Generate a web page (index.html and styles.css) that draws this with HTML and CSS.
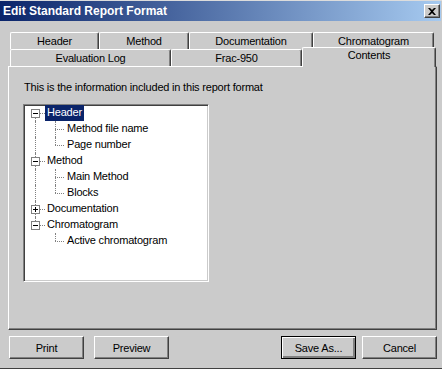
FILE: index.html
```html
<!DOCTYPE html>
<html lang="en">
<head>
    <meta charset="UTF-8">
    <title>Edit Standard Report Format</title>
    <link rel="stylesheet" href="styles.css">
</head>
<body>
    <div class="window">
        <div class="titlebar">
            <span class="title">Edit Standard Report Format</span>
            <span class="close">
                <svg width="8" height="7" viewBox="0 0 8 7"><path d="M0 0h2l2 2 2-2h2L5 3.5 8 7H6L4 5 2 7H0l3-3.5z" fill="#000"/></svg>
            </span>
        </div>
        <div class="dialog">
            <div class="tabs">
                <div class="tab-row back">
                    <div class="tab" style="width:89px">Header</div>
                    <div class="tab" style="width:90px">Method</div>
                    <div class="tab" style="width:124px">Documentation</div>
                    <div class="tab" style="width:121px">Chromatogram</div>
                </div>
                <div class="tab-row front">
                    <div class="tab" style="width:161px">Evaluation Log</div>
                    <div class="tab" style="width:131px">Frac-950</div>
                    <div class="tab active" style="width:134px">Contents</div>
                </div>
            </div>
            <div class="panel">
                <p class="intro">This is the information included in this report format</p>
                <div class="tree">
                    <div class="row root first">
                        <span class="toggle"><svg width="9" height="9"><rect x="0.5" y="0.5" width="8" height="8" fill="#fff" stroke="#808080"/><path d="M2 4.5h5" stroke="#000"/></svg></span>
                        <span class="stub"></span><span class="label selected">Header</span>
                    </div>
                    <div class="row child"><span class="stub"></span><span class="label">Method file name</span></div>
                    <div class="row child last"><span class="stub"></span><span class="label">Page number</span></div>
                    <div class="row root">
                        <span class="toggle"><svg width="9" height="9"><rect x="0.5" y="0.5" width="8" height="8" fill="#fff" stroke="#808080"/><path d="M2 4.5h5" stroke="#000"/></svg></span>
                        <span class="stub"></span><span class="label">Method</span>
                    </div>
                    <div class="row child"><span class="stub"></span><span class="label">Main Method</span></div>
                    <div class="row child last"><span class="stub"></span><span class="label">Blocks</span></div>
                    <div class="row root">
                        <span class="toggle"><svg width="9" height="9"><rect x="0.5" y="0.5" width="8" height="8" fill="#fff" stroke="#808080"/><path d="M2 4.5h5M4.5 2v5" stroke="#000"/></svg></span>
                        <span class="stub"></span><span class="label">Documentation</span>
                    </div>
                    <div class="row root end">
                        <span class="toggle"><svg width="9" height="9"><rect x="0.5" y="0.5" width="8" height="8" fill="#fff" stroke="#808080"/><path d="M2 4.5h5" stroke="#000"/></svg></span>
                        <span class="stub"></span><span class="label">Chromatogram</span>
                    </div>
                    <div class="row child last no-trunk"><span class="stub"></span><span class="label">Active chromatogram</span></div>
                </div>
            </div>
            <div class="buttons">
                <button class="btn">Print</button>
                <button class="btn">Preview</button>
                <span class="spacer"></span>
                <button class="btn default">Save As...</button>
                <button class="btn">Cancel</button>
            </div>
        </div>
    </div>
</body>
</html>
```
FILE: styles.css
```css
* { box-sizing: border-box; }
body {
    margin: 0;
    background: #cbcbcb;
    font-family: 'Liberation Sans', Arial, sans-serif;
    font-size: 11px;
    letter-spacing: -0.2px;
    color: #000;
}
.window {
    width: 442px;
    height: 369px;
    background: #cbcbcb;
    border-top: 1px solid #dcdcdc;
    border-bottom: 1px solid #404040;
    display: flex;
    flex-direction: column;
}
.titlebar {
    height: 20px;
    margin-right: 1px;
    padding: 0 1px 0 3px;
    background: linear-gradient(to right, #0a246a, #a6caf0);
    display: flex;
    align-items: center;
    justify-content: space-between;
    color: #fff;
    font-weight: bold;
    font-size: 12px;
    letter-spacing: 0;
}
.close {
    width: 16px;
    height: 14px;
    background: #cbcbcb;
    border: 1px solid;
    border-color: #fff #404040 #404040 #fff;
    box-shadow: inset -1px -1px #808080;
    display: flex;
    align-items: center;
    justify-content: center;
}
.dialog { flex: 1; display: flex; flex-direction: column; padding: 11px 5px 0 8px; }
.tabs { padding-left: 2px; }
.tab-row { display: flex; height: 17px; align-items: flex-end; }
.tab {
    height: 17px;
    padding-top: 2px;
    line-height: 13px;
    text-align: center;
    border-left: 1px solid #fff;
    border-top: 1px solid #fff;
    border-right: 1px solid #404040;
    border-radius: 2px 2px 0 0;
    box-shadow: inset -1px 0 #808080;
    background: #cbcbcb;
}
.tab.active {
    height: 20px;
    margin-bottom: -1px;
    padding-top: 1px;
    position: relative;
    z-index: 1;
}
.panel {
    height: 264px;
    width: 429px;
    border-left: 1px solid #fff;
    border-top: 1px solid #fff;
    border-right: 1px solid #404040;
    border-bottom: 1px solid #404040;
    box-shadow: inset -1px -1px #808080;
    padding: 14px 0 0 14px;
}
.intro { margin: 0 0 10px 1px; line-height: 13px; }
.tree {
    width: 186px;
    height: 178px;
    background: #fff;
    border: 1px solid;
    border-color: #808080 #fff #fff #808080;
    box-shadow: inset 1px 1px #404040, inset -1px -1px #cbcbcb;
    padding: 0 0 0 2px;
}
.row { position: relative; display: flex; align-items: flex-start; height: 16px; padding-left: 5px; }
.row::before {
    content: '';
    position: absolute;
    left: 9px;
    top: 0;
    height: 16px;
    border-left: 1px dotted #808080;
}
.row.first::before { top: 8px; height: 8px; }
.row.end::before { height: 8px; }
.row.no-trunk::before { display: none; }
.row.child { padding-left: 29px; }
.row.child::after {
    content: '';
    position: absolute;
    left: 29px;
    top: 0;
    height: 16px;
    border-left: 1px dotted #808080;
}
.row.child.last::after { height: 8px; }
.toggle { position: relative; z-index: 1; width: 9px; height: 9px; margin-top: 4px; display: flex; }
.stub { width: 5px; margin-top: 8px; border-top: 1px dotted #808080; }
.child .stub { width: 9px; margin-right: 1px; }
.label { height: 16px; line-height: 15px; padding: 0 2px; white-space: nowrap; }
.label.selected { background: #0a246a; color: #fff; }
.buttons { display: flex; padding: 6px 0 0 1px; }
.spacer { flex: 1; }
.btn {
    width: 75px;
    height: 23px;
    margin-right: 10px;
    font: inherit;
    letter-spacing: -0.2px;
    color: #000;
    background: #cbcbcb;
    border: 1px solid;
    border-color: #fff #404040 #404040 #fff;
    box-shadow: inset -1px -1px #808080;
    padding: 0;
}
.btn.default { margin-right: 6px; border-color: #000; box-shadow: inset 1px 1px #fff, inset -2px -2px #808080, inset -1px -1px #404040; }
.btn:last-child { margin-right: 0; }
```
